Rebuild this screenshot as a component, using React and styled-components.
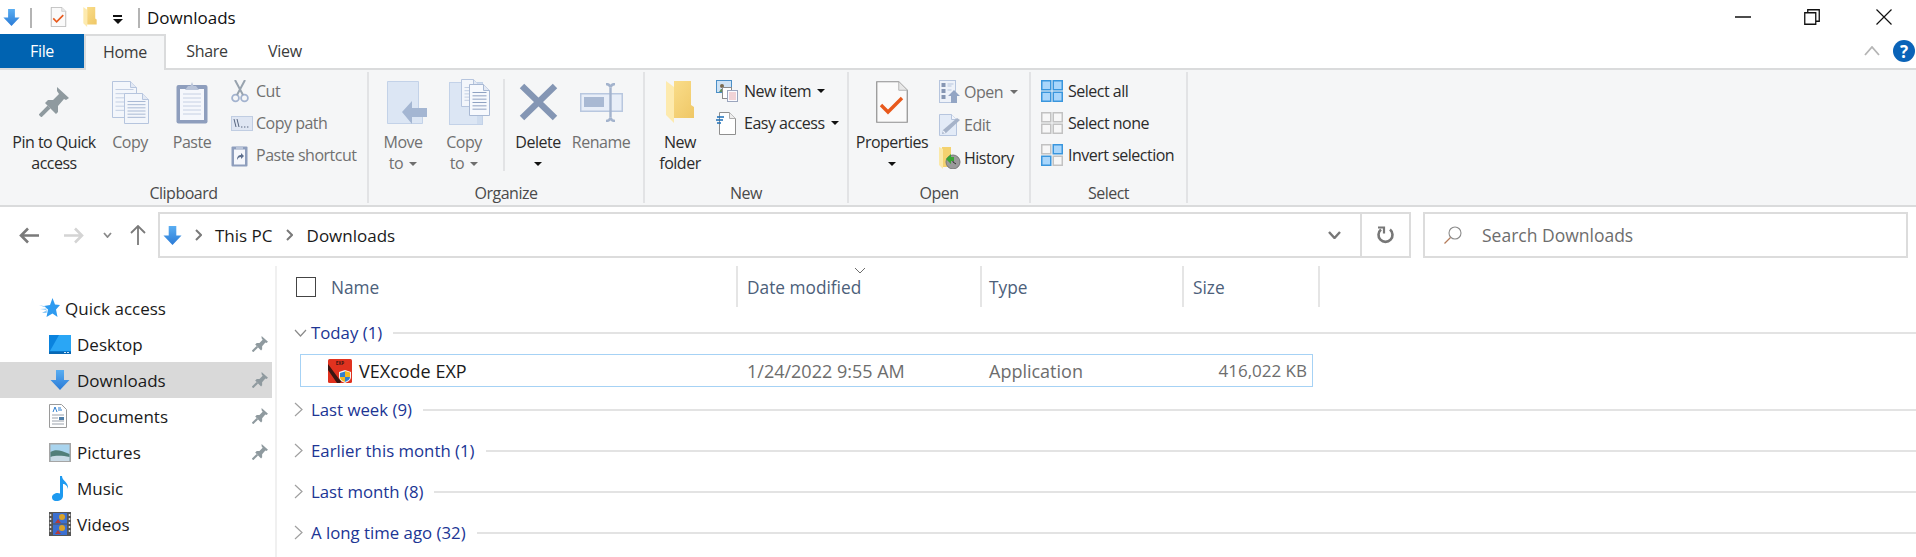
import React, { useId } from "react";
import styled, { createGlobalStyle } from "styled-components";

const GlobalStyle = createGlobalStyle`
  html, body {
    margin: 0;
    padding: 0;
    background: #ffffff;
  }
  * {
    box-sizing: border-box;
  }
`;

const Window = styled.div`
  width: 1916px;
  height: 557px;
  overflow: hidden;
  display: flex;
  flex-direction: column;
  background: #ffffff;
  font-family: "Open Sans", "Noto Sans", sans-serif;
  font-size: 17px;
  color: #1a1a1a;
`;

/* title bar */
const TitleBar = styled.div`
  height: 34px;
  flex: none;
  display: flex;
  align-items: center;
  padding-left: 3px;
`;

const QatSep = styled.div`
  width: 2px;
  height: 20px;
  background: #b4b4b4;
  margin: 2px ${(p) => p.$right || 0}px 0 ${(p) => p.$left || 0}px;
`;

const QatIcon = styled.div`
  display: flex;
  margin-right: ${(p) => p.$right || 0}px;
`;

const QatDrop = styled.div`
  width: 9px;
  margin-right: 16px;
  display: flex;
  flex-direction: column;
  align-items: center;
  gap: 2px;
  margin-top: 5px;
  &::before {
    content: "";
    width: 9px;
    height: 2px;
    background: #111;
  }
  &::after {
    content: "";
    border-left: 5px solid transparent;
    border-right: 5px solid transparent;
    border-top: 5px solid #111;
  }
`;

const TitleText = styled.div`
  margin-left: 7px;
  font-size: 17px;
  color: #111;
`;

const WindowControls = styled.div`
  margin-left: auto;
  display: flex;
  height: 100%;
`;

const WinButton = styled.div`
  width: ${(p) => p.$w}px;
  display: flex;
  align-items: center;
  justify-content: center;
  padding-bottom: 1px;
`;

/* ribbon tabs */
const TabRow = styled.div`
  height: 34px;
  flex: none;
  display: flex;
  position: relative;
  z-index: 1;
`;

const Tab = styled.div`
  width: ${(p) => p.$w}px;
  height: ${(p) => (p.$active ? 36 : 34)}px;
  display: flex;
  align-items: center;
  justify-content: center;
  padding-bottom: ${(p) => (p.$active ? 2 : 0)}px;
  font-size: 16px;
  letter-spacing: -0.3px;
  color: ${(p) => (p.$file ? "#ffffff" : "#3b3b3b")};
  background: ${(p) => (p.$file ? "#0063b1" : p.$active ? "#f5f6f7" : "transparent")};
  border: ${(p) => (p.$active ? "2px solid #dadbdc" : "none")};
  border-bottom: none;
`;

const TabTools = styled.div`
  margin-left: auto;
  display: flex;
  align-items: center;
  padding-right: 1px;
  gap: 13px;
`;

const HelpBadge = styled.div`
  width: 22px;
  height: 22px;
  border-radius: 50%;
  background: #0a63b8;
  color: #ffffff;
  font-size: 17px;
  font-weight: 700;
  display: flex;
  align-items: center;
  justify-content: center;
`;

/* ribbon */
const Ribbon = styled.div`
  height: 139px;
  flex: none;
  display: flex;
  background: #f5f6f7;
  border-top: 2px solid #dadbdc;
  border-bottom: 2px solid #dadbdc;
  padding: 2px 0;
  font-size: 16px;
  letter-spacing: -0.5px;
  white-space: nowrap;
`;

const Group = styled.div`
  width: ${(p) => p.$w}px;
  flex: none;
  display: flex;
  flex-direction: column;
  border-right: 2px solid #e2e3e5;
`;

const GroupBody = styled.div`
  flex: 1;
  display: flex;
  padding-left: ${(p) => p.$pad || 0}px;
`;

const GroupLabel = styled.div`
  height: 20px;
  line-height: 20px;
  text-align: center;
  color: #4a4a4a;
`;

const Large = styled.div`
  width: ${(p) => p.$w}px;
  flex: none;
  display: flex;
  flex-direction: column;
  align-items: center;
  line-height: 21px;
  text-align: center;
  color: ${(p) => (p.$off ? "#707070" : "#2b2b2b")};
`;

const LargeIcon = styled.div`
  height: 60px;
  flex: none;
  display: flex;
  align-items: center;
  justify-content: center;
  padding-left: ${(p) => p.$nudge || 0}px;
`;

const CaretLine = styled.div`
  display: flex;
  align-items: center;
  justify-content: center;
  gap: 6px;
  min-height: 21px;
`;

const Caret = styled.span`
  display: inline-block;
  border-left: 4px solid transparent;
  border-right: 4px solid transparent;
  border-top: 4px solid ${(p) => (p.$off ? "#6e6e6e" : "#111")};
  margin-left: ${(p) => p.$left || 0}px;
`;

const RibbonSep = styled.div`
  width: 2px;
  height: 92px;
  margin: 7px 0 0 ${(p) => p.$left || 0}px;
  background: #e2e3e5;
`;

const SmallCol = styled.div`
  display: flex;
  flex-direction: column;
  padding-top: 3px;
  margin-left: ${(p) => p.$left || 0}px;
`;

const SmallRow = styled.div`
  height: ${(p) => p.$h || 32}px;
  display: flex;
  align-items: center;
  color: ${(p) => (p.$off ? "#707070" : "#2b2b2b")};
`;

const SmallIcon = styled.div`
  width: ${(p) => p.$w}px;
  flex: none;
  display: flex;
`;

/* address row */
const AddressRow = styled.div`
  height: 59px;
  flex: none;
  display: flex;
  padding-top: 5px;
`;

const NavButtons = styled.div`
  width: 158px;
  height: 46px;
  flex: none;
  display: flex;
  align-items: center;
  padding-left: 19px;
`;

const NavBtn = styled.div`
  display: flex;
  margin-right: ${(p) => p.$right || 0}px;
`;

const AddressBox = styled.div`
  width: 1253px;
  height: 46px;
  flex: none;
  display: flex;
  align-items: center;
  border: 2px solid #dcdcdc;
  padding-left: 3px;
`;

const Crumb = styled.div`
  font-size: 17px;
  color: #1a1a1a;
  margin: 0 ${(p) => p.$right || 0}px 0 ${(p) => p.$left || 0}px;
`;

const CrumbChevron = styled.div`
  display: flex;
  margin-left: ${(p) => p.$left || 0}px;
`;

const AddressEnd = styled.div`
  margin-left: auto;
  height: 100%;
  display: flex;
  align-items: center;
`;

const DropPart = styled.div`
  width: 48px;
  height: 100%;
  display: flex;
  align-items: center;
  justify-content: center;
  padding-right: 6px;
  border-right: 2px solid #dcdcdc;
`;

const RefreshPart = styled.div`
  width: 47px;
  display: flex;
  align-items: center;
  justify-content: center;
`;

const SearchBox = styled.div`
  width: 485px;
  height: 46px;
  margin-left: 12px;
  flex: none;
  display: flex;
  align-items: center;
  gap: 20px;
  border: 2px solid #dcdcdc;
  padding-left: 19px;
  font-size: 17.5px;
  color: #6d6d6d;
`;

/* main area */
const Main = styled.div`
  flex: 1;
  display: flex;
  min-height: 0;
`;

const Nav = styled.nav`
  width: 277px;
  flex: none;
  padding: 24px 3px 0 0;
  border-right: 2px solid #f0f0f0;
`;

const NavRow = styled.div`
  height: 36px;
  display: flex;
  align-items: center;
  padding-left: ${(p) => p.$pad}px;
  background: ${(p) => (p.$active ? "#d9d9d9" : "transparent")};
  font-size: 17px;
  color: #1a1a1a;
`;

const NavIcon = styled.div`
  width: ${(p) => p.$w}px;
  flex: none;
  display: flex;
`;

const NavPin = styled.div`
  margin-left: auto;
  margin-right: 4px;
  display: flex;
`;

const Files = styled.div`
  flex: 1;
  min-width: 0;
`;

const HeaderRow = styled.div`
  display: flex;
  height: 41px;
  margin-bottom: 6px;
`;

const HeaderCell = styled.div`
  width: ${(p) => p.$w}px;
  flex: none;
  position: relative;
  display: flex;
  align-items: center;
  gap: 15px;
  padding: 1px 0 0 ${(p) => p.$pad}px;
  border-right: 2px solid #e5e5e5;
  font-size: 17.3px;
  color: #4c607a;
`;

const CheckBox = styled.div`
  width: 20px;
  height: 20px;
  margin-top: -1px;
  border: 1.5px solid #444;
`;

const SortMark = styled.div`
  position: absolute;
  left: 116px;
  top: 1px;
  display: flex;
`;

const GroupRow = styled.div`
  height: 41px;
  display: flex;
  align-items: center;
  padding: 0 0 2px 17px;
  font-size: 16.8px;
  color: #203594;
`;

const GroupChevron = styled.div`
  width: 17px;
  flex: none;
  display: flex;
`;

const GroupLine = styled.div`
  flex: 1;
  height: 2px;
  margin-left: 11px;
  background: #e3e3e3;
`;

const FileRow = styled.div`
  width: 1013px;
  height: 33px;
  margin: 0 0 3px 23px;
  display: flex;
  align-items: center;
  border: 1.5px solid #a6d2f5;
  font-size: 18px;
`;

const NameCell = styled.div`
  width: 437px;
  flex: none;
  display: flex;
  align-items: center;
  gap: 7px;
  padding-left: 27px;
  color: #1a1a1a;
`;

const DataCell = styled.div`
  width: ${(p) => p.$w}px;
  flex: none;
  padding-left: ${(p) => p.$pad}px;
  color: #6d6d6d;
`;

const SizeCell = styled.div`
  flex: 1;
  text-align: right;
  padding-right: 5px;
  font-size: 17px;
  color: #6d6d6d;
`;

/* icons */
const ArrowDownIcon = ({ w = 20, h = 20 }) => {
  const id = useId();
  return (
    <svg width={w} height={h} viewBox="0 0 20 20">
      <defs>
        <linearGradient id={id} x1="0" y1="0" x2="0" y2="1">
          <stop offset="0" stopColor="#5aaef2" />
          <stop offset="1" stopColor="#2a7ad6" />
        </linearGradient>
      </defs>
      <path d="M6 0h8v10h5.5L10 20 .5 10H6z" fill={`url(#${id})`} />
    </svg>
  );
};

const PropsIcon = ({ w = 32, h = 42 }) => (
  <svg width={w} height={h} viewBox="0 0 32 42">
    <path d="M.75.75h22l8.5 8.5v32H.75z" fill="#fafafa" stroke="#8f8f8f" strokeWidth="1.2" />
    <path d="M22.75.75v8.5h8.5" fill="#e8e8e8" stroke="#b5b5b5" strokeWidth="1" />
    <path d="M5 24l7 7L26 17" fill="none" stroke="#e8591c" strokeWidth="3.4" />
  </svg>
);

const FolderIcon = ({ w = 28, h = 42 }) => {
  const id = useId();
  return (
    <svg width={w} height={h} viewBox="0 0 28 42">
      <defs>
        <linearGradient id={id} x1="0" y1="0" x2="1" y2="1">
          <stop offset="0" stopColor="#fbe08f" />
          <stop offset="1" stopColor="#efc766" />
        </linearGradient>
      </defs>
      <path d="M0 0h25v24l3 2v11H8V0z" fill={`url(#${id})`} />
      <path d="M0 0l8 6v36l-8-8z" fill="#fdeaae" />
    </svg>
  );
};

const PinIcon = ({ size = 30, fill = "#8f9a9f" }) => (
  <svg width={size} height={size} viewBox="0 0 30 30">
    <path d="M18 0l12 11-3 2-2-1-6 7 0 6-2 2L6 16l3-3h5l6-6-2-3z" fill={fill} />
    <path d="M10 20L1 29" stroke={fill} strokeWidth="4" />
  </svg>
);

const Page = ({ x, y, w, h, lines = 6, fill = "#f3f6fb", stroke = "#b6c5de", ink = "#c3cfe3" }) => {
  const rows = [];
  for (let i = 0; i < lines; i++) {
    const ly = y + 8 + (i * (h - 11)) / lines;
    rows.push(<path key={i} d={`M${x + 3} ${ly}h${w - 6}`} stroke={ink} strokeWidth="1" />);
  }
  return (
    <g>
      <path d={`M${x} ${y}h${w - 6}l6 6v${h - 6}h${-w}z`} fill={fill} stroke={stroke} strokeWidth="1" />
      <path d={`M${x + w - 6} ${y}v6h6`} fill="#e3e9f4" stroke={stroke} strokeWidth="1" />
      {rows}
    </g>
  );
};

const CopyIcon = () => (
  <svg width="37" height="43" viewBox="0 0 37 43">
    <Page x={.5} y={.5} w={24} h={36} />
    <Page x={12.5} y={12.5} w={24} h={30} ink="#a9b9d4" />
  </svg>
);

const PasteIcon = () => (
  <svg width="32" height="43" viewBox="0 0 32 43">
    <rect x="0.5" y="4" width="31" height="38.5" rx="2" fill="#8e9ebd" />
    <rect x="4" y="8" width="24" height="31" fill="#f5f7fc" />
    <path d="M7 13h18M7 17h18M7 21h18M7 25h18M7 29h18M7 33h18" stroke="#c6d0e3" strokeWidth="1" />
    <path d="M9 9l3-4h2.5L16 1l1.5 4H20l3 4z" fill="#b9c4d9" />
  </svg>
);

const ScissorsIcon = () => (
  <svg width="18" height="23" viewBox="0 0 18 23">
    <circle cx="4.5" cy="18" r="3.4" fill="none" stroke="#a3b3cf" strokeWidth="1.8" />
    <circle cx="13.5" cy="18" r="3.4" fill="none" stroke="#a3b3cf" strokeWidth="1.8" />
    <path d="M6 15L14 0M12 15L4 0" stroke="#98a3ae" strokeWidth="2" />
  </svg>
);

const CopyPathIcon = () => (
  <svg width="22" height="15" viewBox="0 0 22 15">
    <rect x=".5" y=".5" width="21" height="14" fill="#dfe6f3" stroke="#c0cde2" />
    <path d="M3 3l2 8M6 3l2 8" stroke="#56647e" strokeWidth="1" />
    <path d="M10 11h1.4M13 11h1.4M16 11h1.4" stroke="#56647e" strokeWidth="1" />
  </svg>
);

const PasteShortcutIcon = () => (
  <svg width="17" height="23" viewBox="0 0 17 23">
    <rect x=".5" y="2.5" width="16" height="20" rx="1" fill="#8e9ebd" />
    <rect x="3" y="5.5" width="11" height="15" fill="#f5f7fc" />
    <path d="M5 2.5h7V5H5z" fill="#b9c4d9" />
    <path d="M6 16c0-4 2-5 4-5V9l3 3-3 3v-2c-2 0-3 1-4 3z" fill="#5d6f8e" />
  </svg>
);

const MoveToIcon = () => (
  <svg width="40" height="43" viewBox="0 0 40 43">
    <path d="M.5.5h31v28l4 3v11H.5z" fill="#dce6f4" stroke="#c3d2e8" />
    <path d="M15 31l10-11v7h15v9H25v7z" fill="#a4b6d2" />
  </svg>
);

const CopyToIcon = () => (
  <svg width="41" height="46" viewBox="0 0 41 46">
    <rect x=".5" y="3.5" width="33" height="42" fill="#dce6f4" stroke="#c3d2e8" />
    <path d="M28 4h5v41h-5z" fill="#cfdcee" />
    <Page x={12.5} y={.5} w={18} h={27} lines={5} fill="#f3f6fb" />
    <Page x={20.5} y={5.5} w={20} h={31} lines={6} fill="#f7f9fd" stroke="#a9b9d4" ink="#8fa2c2" />
  </svg>
);

const DeleteIcon = () => (
  <svg width="39" height="38" viewBox="0 0 39 38">
    <path d="M3 3l33 32M36 3L3 35" stroke="#8496b4" strokeWidth="6.4" />
  </svg>
);

const RenameIcon = () => (
  <svg width="43" height="39" viewBox="0 0 43 39">
    <rect x=".75" y="10.75" width="41.5" height="17.5" fill="#e8eef8" stroke="#b8c7df" strokeWidth="1.5" />
    <rect x="4" y="14" width="20" height="10" fill="#a9b9d3" />
    <path d="M26 1c3 0 4 1 4.5 3.5C31 2 32 1 35 1M30.5 5v29M26 38c3 0 4-1 4.5-3.5C31 37 32 38 35 38" fill="none" stroke="#a3b3cd" strokeWidth="2.4" />
  </svg>
);

const NewItemIcon = () => (
  <svg width="22" height="22" viewBox="0 0 22 22">
    <rect x=".5" y=".5" width="15" height="12" fill="#cfe3f5" stroke="#4b8fc7" />
    <circle cx="6" cy="6" r="2" fill="#7a6a4f" />
    <path d="M3 12l2-3h3l2 3z" fill="#5f8f5f" />
    <rect x="6.5" y="7.5" width="9" height="11" fill="#fff" stroke="#8c8c8c" />
    <rect x="11.5" y="10.5" width="10" height="11" fill="#fbfbff" stroke="#9aa5bd" />
    <path d="M13 13h7M13 15h7M13 17h7M13 19h7" stroke="#e39a9a" strokeWidth=".8" />
  </svg>
);

const EasyAccessIcon = () => (
  <svg width="20" height="23" viewBox="0 0 20 23">
    <path d="M3.5.5h10l6 6v16h-16z" fill="#fff" stroke="#8f8f8f" />
    <path d="M13.5.5v6h6" fill="#eeeeee" stroke="#adadad" />
    <path d="M1 5h7M0 8h7M1 11h4" stroke="#1d6fb8" strokeWidth="1.3" />
  </svg>
);

const OpenIcon = () => (
  <svg width="21" height="23" viewBox="0 0 21 23">
    <rect x=".5" y=".5" width="16" height="22" fill="#eef2f9" stroke="#b6c5de" />
    <path d="M2.5 3h4v4h-4zM2.5 9h4v4h-4zM2.5 15h4v4h-4z" fill="#8696b3" />
    <path d="M8.5 4h6M8.5 6h4M8.5 10h4" stroke="#b6c5de" />
    <path d="M15 10l6 6h-3v7h-6v-7H9z" fill="#93a5c4" />
  </svg>
);

const EditIcon = () => (
  <svg width="22" height="22" viewBox="0 0 22 22">
    <path d="M.5.5h12l5 5v16H.5z" fill="#e3ebf7" stroke="#b6c5de" />
    <path d="M12.5.5v5h5" fill="#f2f5fb" stroke="#b6c5de" />
    <path d="M3 20l1-4L18 4l3 2L7 19z" fill="#a6b3c9" />
    <path d="M4 17l2 2" stroke="#eef2f9" strokeWidth="1.2" />
  </svg>
);

const HistoryIcon = () => (
  <svg width="22" height="22" viewBox="0 0 22 22">
    <path d="M3 0h9v20H3z" fill="#f4d26f" />
    <path d="M0 0l4 2v20l-4-4z" fill="#fbe9a9" />
    <circle cx="14" cy="15" r="7" fill="#9a9a9a" stroke="#777" />
    <path d="M14 11v4l3 2" stroke="#333" fill="none" />
    <path d="M7 12l5-5v3h3v4h-3v3z" fill="#3aa535" />
  </svg>
);

const GridIcon = ({ on }) => (
  <svg width="22" height="22" viewBox="0 0 22 22">
    {[0, 1, 2, 3].map((i) => (
      <rect
        key={i}
        x={(i % 2) * 11.5 + 0.75}
        y={Math.floor(i / 2) * 11.5 + 0.75}
        width="9"
        height="9"
        fill={on.includes(i) ? "#a9d6fb" : "#f7f7f7"}
        stroke={on.includes(i) ? "#3a96dd" : "#c2c2c2"}
        strokeWidth="1.5"
      />
    ))}
  </svg>
);

const StarIcon = () => (
  <svg width="21" height="20" viewBox="0 0 21 20">
    <path d="M13.500 0l2.500 6.500 5 .5-4 4.500 1.500 7.500-5-3.500L7.500 19 9 11.500 5 8l6-1z" fill="#2e9bf0" />
    <path d="M0 7l7 1.500-2 .5zM1 11l7-.5-1 1.500zM3 15l5-3-.5 3z" fill="#8fcaf7" />
  </svg>
);

const DesktopIcon = () => (
  <svg width="22" height="19" viewBox="0 0 22 19">
    <rect width="22" height="19" fill="#0a83de" />
    <path d="M10 0h12v16H1z" fill="#2aa6f5" />
    <path d="M0 16.5h22V19H0z" fill="#0868b4" />
    <path d="M15 17.5h2M18 17.5h2" stroke="#cfe9fb" />
  </svg>
);

const DocumentIcon = () => (
  <svg width="18" height="24" viewBox="0 0 18 24">
    <path d="M.5.5h12l5 5v18H.5z" fill="#fff" stroke="#9a9a9a" />
    <path d="M4 8l2-5 2 5M9 4h3M9 6h4" fill="none" stroke="#2f7fd0" />
    <path d="M3 11h12M3 14h6M3 17h12M3 20h12" stroke="#9aa1ab" />
    <rect x="10" y="13" width="5" height="3" fill="#4f7ea8" />
  </svg>
);

const PictureIcon = () => (
  <svg width="22" height="19" viewBox="0 0 22 19">
    <rect x=".75" y=".75" width="20.5" height="17.5" fill="#a9d4ee" stroke="#a5a5a5" strokeWidth="1.5" />
    <path d="M1.5 9c5-3 10-2 19 2v7h-19z" fill="#517f7a" />
    <path d="M1.5 14c6-2 13-1 19 0v4h-19z" fill="#c9dbe6" />
  </svg>
);

const MusicIcon = () => (
  <svg width="20" height="25" viewBox="-3 0 20 25">
    <path d="M8 0h2c0 5 7 6 6 13-.4-3-3-5-5-5v12c0 3-3 5-6.500 5S0 23 0 21s3-4 5.500-4c1 0 2 .2 2.500 .5z" fill="#1e9af0" />
  </svg>
);

const VideoIcon = () => (
  <svg width="22" height="24" viewBox="0 0 22 24">
    <rect width="22" height="24" fill="#555" />
    <rect x="4" y="1" width="14" height="10.500" fill="#3b6fd0" />
    <rect x="4" y="12.500" width="14" height="10.500" fill="#3b6fd0" />
    <circle cx="13" cy="5" r="3" fill="#d8a22a" />
    <circle cx="13" cy="16" r="3" fill="#d8a22a" />
    <path d="M6 11l3-4 3 4zM6 22l3-4 3 4z" fill="#b33b3b" />
    <path d="M1.500 2v20M20.500 2v20" stroke="#ddd" strokeWidth="1.500" strokeDasharray="2 2" />
  </svg>
);

const VexIcon = () => (
  <svg width="24" height="24" viewBox="0 0 24 24">
    <rect width="24" height="24" rx="1.500" fill="#e0321f" />
    <path d="M0 5l11 15 6-9 2 2-7 11H9L0 11z" fill="#3a1512" />
    <text x="12" y="6" fontSize="4.500" fontWeight="700" textAnchor="middle" fill="#3a1512" fontFamily="Open Sans">EXP</text>
    <path d="M11 13l6-2 6 2v5c0 3-3 5-6 6-3-1-6-3-6-6z" fill="#f4f4f4" />
    <path d="M17 12l5 1.500V18h-5zM12 18h5v5c-2-1-5-2-5-5z" fill="#f3b81f" />
    <path d="M12 14l5-1.500V18h-5zM17 18h5c0 3-3 4-5 5z" fill="#2f7fd0" />
  </svg>
);

const Chevron = ({ dir = "right", w = 10, h = 16, color = "#a6a6a6", sw = 1.4 }) => {
  const d = dir === "right"
    ? `M1 1L${w - 1} ${h / 2}L1 ${h - 1}`
    : dir === "down"
      ? `M1 1L${w / 2} ${h - 1}L${w - 1} 1`
      : `M1 ${h - 1}L${w / 2} 1L${w - 1} ${h - 1}`;
  return (
    <svg width={w} height={h} viewBox={`0 0 ${w} ${h}`}>
      <path d={d} fill="none" stroke={color} strokeWidth={sw} />
    </svg>
  );
};

const HArrow = ({ dir, color }) => (
  <svg width="20" height="17" viewBox="0 0 20 17">
    <path
      d={dir === "left" ? "M9 1.500L2 8.500l7 7M2 8.500h18" : "M11 1.500l7 7-7 7M18 8.500H0"}
      fill="none"
      stroke={color}
      strokeWidth="2.600"
    />
  </svg>
);

const groups = ["Last week (9)", "Earlier this month (1)", "Last month (8)", "A long time ago (32)"];

const navItems = [
  { label: "Desktop", icon: <DesktopIcon />, pinned: true },
  { label: "Downloads", icon: <ArrowDownIcon w={22} h={20} />, pinned: true, active: true },
  { label: "Documents", icon: <DocumentIcon />, pinned: true },
  { label: "Pictures", icon: <PictureIcon />, pinned: true },
  { label: "Music", icon: <MusicIcon /> },
  { label: "Videos", icon: <VideoIcon /> },
];

export default function App() {
  return (
    <Window>
      <GlobalStyle />

      <TitleBar>
        <QatIcon><ArrowDownIcon w={17} h={19} /></QatIcon>
        <QatSep $left={10} $right={18} />
        <QatIcon $right={16}><PropsIcon w={17} h={20} /></QatIcon>
        <QatIcon $right={16}><FolderIcon w={14} h={20} /></QatIcon>
        <QatDrop />
        <QatSep />
        <TitleText>Downloads</TitleText>
        <WindowControls>
          <WinButton $w={58}>
            <svg width="16" height="2" viewBox="0 0 16 2"><path d="M0 1h16" stroke="#111" strokeWidth="1.500" /></svg>
          </WinButton>
          <WinButton $w={80}>
            <svg width="16" height="16" viewBox="0 0 16 16">
              <path d="M.75 3.750h11v11.500H.75zM3.750 3.500V.75h11.500v11.500H12" fill="none" stroke="#111" strokeWidth="1.300" />
            </svg>
          </WinButton>
          <WinButton $w={64}>
            <svg width="16" height="16" viewBox="0 0 16 16"><path d="M.5.5l15 15M15.500.5l-15 15" stroke="#111" strokeWidth="1.200" /></svg>
          </WinButton>
        </WindowControls>
      </TitleBar>

      <TabRow>
        <Tab $w={84} $file>File</Tab>
        <Tab $w={82} $active>Home</Tab>
        <Tab $w={82}>Share</Tab>
        <Tab $w={74}>View</Tab>
        <TabTools>
          <Chevron dir="up" w={16} h={10} color="#b5b5b5" sw={1.800} />
          <HelpBadge>?</HelpBadge>
        </TabTools>
      </TabRow>

      <Ribbon>
        <Group $w={369}>
          <GroupBody $pad={8}>
            <Large $w={92}>
              <LargeIcon><PinIcon /></LargeIcon>
              Pin to Quick<br />access
            </Large>
            <Large $w={60} $off>
              <LargeIcon><CopyIcon /></LargeIcon>
              Copy
            </Large>
            <Large $w={64} $off>
              <LargeIcon><PasteIcon /></LargeIcon>
              Paste
            </Large>
            <SmallCol $left={7}>
              <SmallRow $off><SmallIcon $w={25}><ScissorsIcon /></SmallIcon>Cut</SmallRow>
              <SmallRow $off><SmallIcon $w={25}><CopyPathIcon /></SmallIcon>Copy path</SmallRow>
              <SmallRow $off><SmallIcon $w={25}><PasteShortcutIcon /></SmallIcon>Paste shortcut</SmallRow>
            </SmallCol>
          </GroupBody>
          <GroupLabel>Clipboard</GroupLabel>
        </Group>

        <Group $w={276}>
          <GroupBody>
            <Large $w={68} $off>
              <LargeIcon $nudge={8}><MoveToIcon /></LargeIcon>
              Move
              <CaretLine>to<Caret $off /></CaretLine>
            </Large>
            <Large $w={54} $off>
              <LargeIcon $nudge={11}><CopyToIcon /></LargeIcon>
              Copy
              <CaretLine>to<Caret $off /></CaretLine>
            </Large>
            <RibbonSep $left={12} />
            <Large $w={66}>
              <LargeIcon><DeleteIcon /></LargeIcon>
              Delete
              <CaretLine><Caret /></CaretLine>
            </Large>
            <Large $w={60} $off>
              <LargeIcon><RenameIcon /></LargeIcon>
              Rename
            </Large>
          </GroupBody>
          <GroupLabel>Organize</GroupLabel>
        </Group>

        <Group $w={204}>
          <GroupBody>
            <Large $w={70}>
              <LargeIcon><FolderIcon /></LargeIcon>
              New<br />folder
            </Large>
            <SmallCol $left={1}>
              <SmallRow><SmallIcon $w={28}><NewItemIcon /></SmallIcon>New item<Caret $left={6} /></SmallRow>
              <SmallRow><SmallIcon $w={28}><EasyAccessIcon /></SmallIcon>Easy access<Caret $left={6} /></SmallRow>
            </SmallCol>
          </GroupBody>
          <GroupLabel>New</GroupLabel>
        </Group>

        <Group $w={182}>
          <GroupBody>
            <Large $w={86}>
              <LargeIcon><PropsIcon /></LargeIcon>
              Properties
              <CaretLine><Caret /></CaretLine>
            </Large>
            <SmallCol $left={4}>
              <SmallRow $off $h={33}><SmallIcon $w={25}><OpenIcon /></SmallIcon>Open<Caret $off $left={7} /></SmallRow>
              <SmallRow $off $h={33}><SmallIcon $w={25}><EditIcon /></SmallIcon>Edit</SmallRow>
              <SmallRow $h={33}><SmallIcon $w={25}><HistoryIcon /></SmallIcon>History</SmallRow>
            </SmallCol>
          </GroupBody>
          <GroupLabel>Open</GroupLabel>
        </Group>

        <Group $w={157}>
          <GroupBody $pad={10}>
            <SmallCol>
              <SmallRow><SmallIcon $w={27}><GridIcon on={[0, 1, 2, 3]} /></SmallIcon>Select all</SmallRow>
              <SmallRow><SmallIcon $w={27}><GridIcon on={[]} /></SmallIcon>Select none</SmallRow>
              <SmallRow><SmallIcon $w={27}><GridIcon on={[1, 2]} /></SmallIcon>Invert selection</SmallRow>
            </SmallCol>
          </GroupBody>
          <GroupLabel>Select</GroupLabel>
        </Group>
      </Ribbon>

      <AddressRow>
        <NavButtons>
          <NavBtn $right={25}><HArrow dir="left" color="#7a7a7a" /></NavBtn>
          <NavBtn $right={19}><HArrow dir="right" color="#d4d4d4" /></NavBtn>
          <NavBtn $right={18}><Chevron dir="down" w={9} h={6} color="#8a8a8a" sw={1.800} /></NavBtn>
          <NavBtn>
            <svg width="16" height="20" viewBox="0 0 16 20">
              <path d="M1 8l7-7 7 7M8 1v19" fill="none" stroke="#7a7a7a" strokeWidth="1.800" />
            </svg>
          </NavBtn>
        </NavButtons>
        <AddressBox>
          <ArrowDownIcon w={19} h={19} />
          <CrumbChevron $left={13}><Chevron w={7} h={12} color="#7a7a7a" sw={2} /></CrumbChevron>
          <Crumb $left={13} $right={13}>This PC</Crumb>
          <CrumbChevron><Chevron w={7} h={12} color="#7a7a7a" sw={2} /></CrumbChevron>
          <Crumb $left={14}>Downloads</Crumb>
          <AddressEnd>
            <DropPart><Chevron dir="down" w={13} h={8} color="#777" sw={2.400} /></DropPart>
            <RefreshPart>
              <svg width="17" height="18" viewBox="0 0 17 18">
                <path d="M13 3.500a7 7 0 1 1-9 0" fill="none" stroke="#777" strokeWidth="2.600" />
                <path d="M1 1.500h6v6" fill="none" stroke="#777" strokeWidth="2.200" />
              </svg>
            </RefreshPart>
          </AddressEnd>
        </AddressBox>
        <SearchBox>
          <svg width="18" height="18" viewBox="0 0 18 18">
            <circle cx="11" cy="7" r="6" fill="none" stroke="#8b8b8b" strokeWidth="1.100" />
            <path d="M6.500 11.500L.5 17.500" stroke="#b47b5a" strokeWidth="1.300" />
          </svg>
          Search Downloads
        </SearchBox>
      </AddressRow>

      <Main>
        <Nav>
          <NavRow $pad={39}>
            <NavIcon $w={26}><StarIcon /></NavIcon>
            Quick access
          </NavRow>
          {navItems.map((item) => (
            <NavRow key={item.label} $pad={49} $active={item.active}>
              <NavIcon $w={28}>{item.icon}</NavIcon>
              {item.label}
              {item.pinned && <NavPin><PinIcon size={16} /></NavPin>}
            </NavRow>
          ))}
        </Nav>

        <Files>
          <HeaderRow>
            <HeaderCell $w={461} $pad={19}><CheckBox />Name</HeaderCell>
            <HeaderCell $w={244} $pad={9}>
              Date modified
              <SortMark><Chevron dir="down" w={12} h={7} color="#6d6d6d" sw={1} /></SortMark>
            </HeaderCell>
            <HeaderCell $w={202} $pad={7}>Type</HeaderCell>
            <HeaderCell $w={136} $pad={9}>Size</HeaderCell>
          </HeaderRow>

          <GroupRow>
            <GroupChevron><Chevron dir="down" w={13} h={8} color="#8a8a8a" sw={1.200} /></GroupChevron>
            Today (1)
            <GroupLine />
          </GroupRow>
          <FileRow>
            <NameCell><VexIcon />VEXcode EXP</NameCell>
            <DataCell $w={244} $pad={9}>1/24/2022 9:55 AM</DataCell>
            <DataCell $w={202} $pad={7}>Application</DataCell>
            <SizeCell>416,022 KB</SizeCell>
          </FileRow>
          {groups.map((g) => (
            <GroupRow key={g}>
              <GroupChevron><Chevron w={9} h={15} color="#a0a0a0" sw={1.200} /></GroupChevron>
              {g}
              <GroupLine />
            </GroupRow>
          ))}
        </Files>
      </Main>
    </Window>
  );
}
